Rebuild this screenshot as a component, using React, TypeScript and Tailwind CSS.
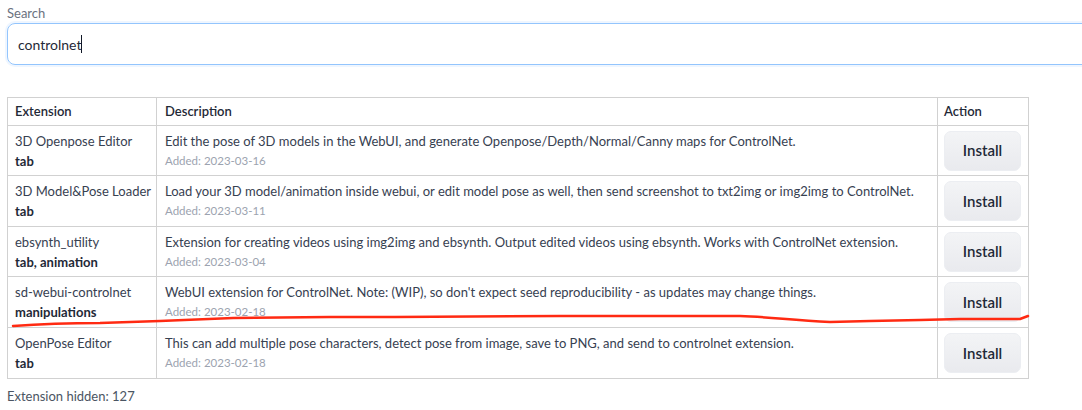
import React from 'react';

type Ext = {
  name: string;
  tags: string;
  description: string;
  added: string;
};

const extensions: Ext[] = [
  {
    name: '3D Openpose Editor',
    tags: 'tab',
    description:
      'Edit the pose of 3D models in the WebUI, and generate Openpose/Depth/Normal/Canny maps for ControlNet.',
    added: '2023-03-16',
  },
  {
    name: '3D Model&Pose Loader',
    tags: 'tab',
    description:
      'Load your 3D model/animation inside webui, or edit model pose as well, then send screenshot to txt2img or img2img to ControlNet.',
    added: '2023-03-11',
  },
  {
    name: 'ebsynth_utility',
    tags: 'tab, animation',
    description:
      'Extension for creating videos using img2img and ebsynth. Output edited videos using ebsynth. Works with ControlNet extension.',
    added: '2023-03-04',
  },
  {
    name: 'sd-webui-controlnet',
    tags: 'manipulations',
    description:
      "WebUI extension for ControlNet. Note: (WIP), so don't expect seed reproducibility - as updates may change things.",
    added: '2023-02-18',
  },
  {
    name: 'OpenPose Editor',
    tags: 'tab',
    description:
      'This can add multiple pose characters, detect pose from image, save to PNG, and send to controlnet extension.',
    added: '2023-02-18',
  },
];

export default function App() {
  return (
    <div
      className="relative w-[1082px] h-[410px] overflow-hidden bg-white text-[#374151]"
      style={{ fontFamily: 'Lato, "Noto Sans", sans-serif' }}
    >
      <div className="pl-[7px] pt-[4px]">
        <label className="block text-[13px] leading-[18px] text-[#6b7280]">
          Search
        </label>
        <div className="w-[1100px] h-[42px] mt-[1px] rounded-[8px] border border-[#93c5fd] shadow-[0_0_0_2px_#eff6ff] flex items-center pl-[10px]">
          <span className="text-[14px] text-[#1f2937]">controlnet</span>
          <span className="w-px h-[18px] bg-[#111827]" />
        </div>

        <table className="mt-[32px] w-[1021px] border-collapse table-fixed text-[13px]">
          <colgroup>
            <col className="w-[149px]" />
            <col className="w-[781px]" />
            <col className="w-[91px]" />
          </colgroup>
          <thead>
            <tr className="h-[28px]">
              <th className="border border-[#d1d1d1] px-[7px] text-left font-semibold text-[#1f2937]">
                Extension
              </th>
              <th className="border border-[#d1d1d1] px-[8px] text-left font-semibold text-[#1f2937]">
                Description
              </th>
              <th className="border border-[#d1d1d1] px-[6px] text-left font-semibold text-[#1f2937]">
                Action
              </th>
            </tr>
          </thead>
          <tbody>
            {extensions.map((ext, i) => (
              <tr key={ext.name} className={i === 0 || i === 2 ? 'h-[50px]' : 'h-[51px]'}>
                <td className="border border-[#d1d1d1] px-[7px] align-top pt-[5px]">
                  <div className="leading-[20px] whitespace-nowrap">{ext.name}</div>
                  <div className="leading-[20px] font-bold text-[#1f2937]">
                    {ext.tags}
                  </div>
                </td>
                <td className="border border-[#d1d1d1] px-[8px] align-top pt-[5px]">
                  <div className="leading-[20px] whitespace-nowrap">{ext.description}</div>
                  <div className="leading-[20px] text-[11.5px] text-[#9ca3af]">
                    Added: {ext.added}
                  </div>
                </td>
                <td className="border border-[#d1d1d1] px-[6px] align-middle">
                  <button className="w-[77px] h-[40px] rounded-[7px] bg-gradient-to-b from-[#f3f4f6] to-[#e9eaee] border border-[#eceef2] text-[15px] font-semibold text-[#1f2937]">
                    Install
                  </button>
                </td>
              </tr>
            ))}
          </tbody>
        </table>

        <div className="mt-[8px] text-[13px] text-[#4b5563]">Extension hidden: 127</div>
      </div>

      <svg
        className="absolute left-0 top-0 pointer-events-none"
        width="1082"
        height="410"
      >
        <path
          d="M13 326 C 40 324, 80 323, 100 323 L 160 321 L 233 318 L 330 317 L 395 317 L 560 316 L 740 316 C 770 317, 790 320, 830 322 L 870 321 L 920 320 L 960 319 L 1020 319 L 1028 316"
          fill="none"
          stroke="#ff2a12"
          strokeWidth="2.5"
          strokeLinecap="round"
          strokeLinejoin="round"
        />
      </svg>
    </div>
  );
}
